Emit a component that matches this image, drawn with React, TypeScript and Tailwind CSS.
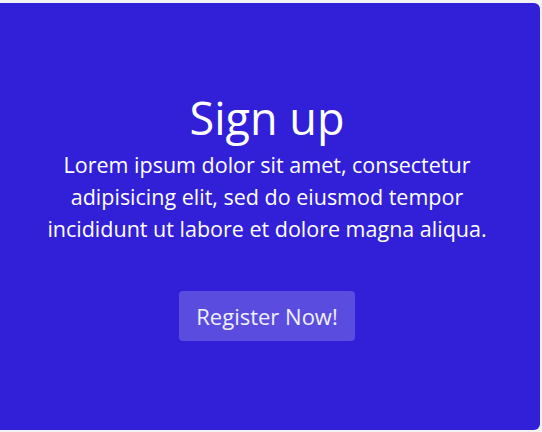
export default function App() {
  return (
    <div className="h-[432px] w-[542px] overflow-hidden bg-[#f2f2f2] pt-[3px]">
      <div className="-ml-[6px] flex h-[427px] w-[546px] flex-col items-center justify-center rounded-md bg-[#3220d9] text-center text-white font-['Open_Sans',sans-serif]">
        <h1 className="text-[45px] leading-[52px] font-normal">Sign up</h1>
        <p className="mt-[5px] w-[490px] text-[21.5px] leading-[32px]">
          Lorem ipsum dolor sit amet, consectetur adipisicing elit, sed do eiusmod tempor incididunt ut labore et dolore
          magna aliqua.
        </p>
        <button className="mt-[46px] h-[50px] rounded-[4px] bg-white/20 px-[17px] text-[22px] text-[#f0f0ff]">
          Register Now!
        </button>
      </div>
    </div>
  );
}
